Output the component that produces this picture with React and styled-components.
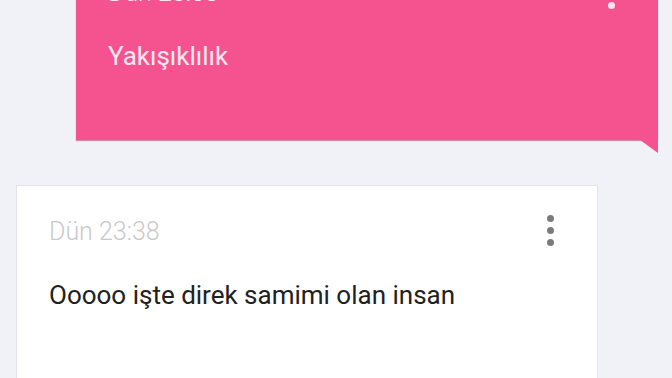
import React from 'react';
import styled, { createGlobalStyle } from 'styled-components';

const GlobalStyle = createGlobalStyle`
  html, body {
    margin: 0;
    padding: 0;
    background: #f1f1f8;
    overflow: hidden;
  }
  body {
    font-family: Roboto, "Noto Sans", sans-serif;
  }
`;

const Thread = styled.div`
  display: flex;
  flex-direction: column;
  gap: 45px;
  width: 672px;
  height: 378px;
  overflow: hidden;
`;

const Bubble = styled.div`
  position: relative;
  box-sizing: border-box;
  width: 582px;
  padding: 30px 32px 0 32px;
  align-self: ${(p) => (p.$mine ? 'flex-end' : 'flex-start')};
  margin: ${(p) => (p.$mine ? '-53px 14px 0 0' : '0 0 0 16px')};
  height: ${(p) => (p.$mine ? '193px' : '260px')};
  background: ${(p) => (p.$mine ? '#f5538f' : '#ffffff')};
  border: ${(p) => (p.$mine ? 'none' : '1px solid #e3e3ea')};
  box-shadow: ${(p) => (p.$mine ? '0 1px 1px rgba(150, 30, 70, 0.45)' : 'none')};
  flex-shrink: 0;

  &::after {
    content: '';
    display: ${(p) => (p.$mine ? 'block' : 'none')};
    position: absolute;
    right: 0;
    bottom: -13px;
    width: 18px;
    height: 13px;
    background: #f5538f;
    clip-path: polygon(0 0, 100% 0, 100% 100%);
  }
`;

const Header = styled.div`
  display: flex;
  align-items: flex-start;
  justify-content: space-between;
`;

const Stamp = styled.span`
  font-size: 25px;
  font-weight: 300;
  line-height: 32px;
  color: ${(p) => (p.$mine ? '#fde3ec' : '#c9c9c9')};
`;

const Kebab = styled.div`
  display: flex;
  flex-direction: column;
  gap: 5px;
  margin-top: ${(p) => (p.$mine ? '1px' : '-1px')};
  padding-right: 11px;
`;

const Dot = styled.span`
  width: 7px;
  height: 7px;
  border-radius: 50%;
  background: ${(p) => (p.$mine ? '#fbe4ec' : '#7b7b7b')};
`;

const Text = styled.p`
  margin: 30px 0 0 0;
  font-size: 26px;
  line-height: 34px;
  color: ${(p) => (p.$mine ? '#fde8ef' : '#212121')};
`;

const Message = ({ mine, time, text }) => (
  <Bubble $mine={mine}>
    <Header>
      <Stamp $mine={mine}>{time}</Stamp>
      <Kebab $mine={mine}>
        <Dot $mine={mine} />
        <Dot $mine={mine} />
        <Dot $mine={mine} />
      </Kebab>
    </Header>
    <Text $mine={mine}>{text}</Text>
  </Bubble>
);

export default function App() {
  return (
    <>
      <GlobalStyle />
      <Thread>
        <Message mine time="Dün 23:38" text="Yakışıklılık" />
        <Message time="Dün 23:38" text="Ooooo işte direk samimi olan insan" />
      </Thread>
    </>
  );
}
